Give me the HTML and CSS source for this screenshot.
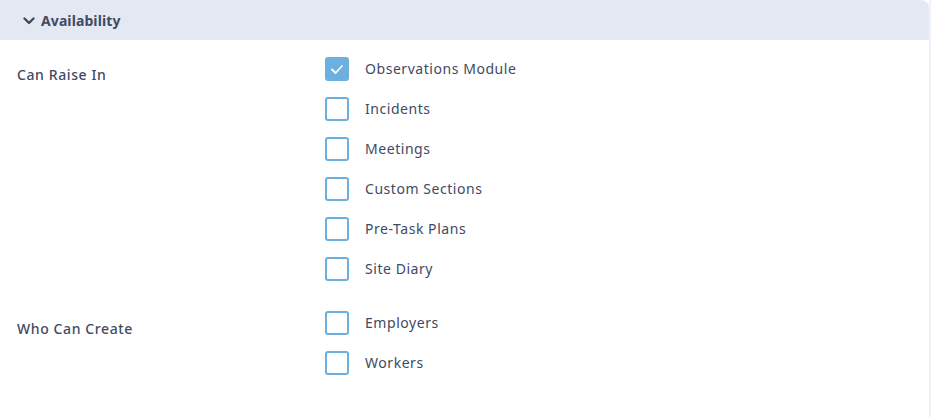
FILE: index.html
```html
<!DOCTYPE html>
<html>
<head>
<meta charset="utf-8">
<link rel="stylesheet" href="styles.css">
</head>
<body>
<div class="panel">
  <div class="panel-header">
    <svg class="chev" width="12" height="8" viewBox="0 0 12 8"><path d="M1.5 1.5 L6 6 L10.5 1.5" fill="none" stroke="#3f4a63" stroke-width="2.4" stroke-linecap="round" stroke-linejoin="round"/></svg>
    <span class="title">Availability</span>
  </div>
  <div class="panel-body">
    <div class="field">
      <div class="label">Can Raise In</div>
      <div class="options">
        <label class="opt"><span class="box checked"><svg width="14" height="11" viewBox="0 0 14 11"><path d="M2 5.5 L5.5 9 L12 2" fill="none" stroke="#fff" stroke-width="1.8" stroke-linecap="round" stroke-linejoin="round"/></svg></span><span class="txt">Observations Module</span></label>
        <label class="opt"><span class="box"></span><span class="txt">Incidents</span></label>
        <label class="opt"><span class="box"></span><span class="txt">Meetings</span></label>
        <label class="opt"><span class="box"></span><span class="txt">Custom Sections</span></label>
        <label class="opt"><span class="box"></span><span class="txt">Pre-Task Plans</span></label>
        <label class="opt"><span class="box"></span><span class="txt">Site Diary</span></label>
      </div>
    </div>
    <div class="field">
      <div class="label">Who Can Create</div>
      <div class="options">
        <label class="opt"><span class="box"></span><span class="txt">Employers</span></label>
        <label class="opt"><span class="box"></span><span class="txt">Workers</span></label>
      </div>
    </div>
  </div>
</div>
</body>
</html>
```
FILE: styles.css
```css
html, body { margin: 0; padding: 0; background: #fff; }
body {
  font-family: "Noto Sans", "Open Sans", sans-serif;
  color: #3f4a63;
  width: 931px;
  height: 417px;
  overflow: hidden;
}
.panel {
  width: 929px;
  height: 417px;
  border-right: 2px solid #eef1f7;
}
.panel-header {
  height: 40px;
  background: #e4e8f2;
  border-top-right-radius: 8px;
  display: flex;
  align-items: center;
  padding-left: 23px;
  gap: 6px;
}
.chev { margin-top: 1px; }
.title {
  font-weight: 700;
  font-size: 14px;
  letter-spacing: 0.1px;
}
.panel-body {
  padding-top: 17px;
  display: flex;
  flex-direction: column;
  gap: 30px;
}
.field {
  display: flex;
}
.label {
  width: 308px;
  padding-left: 17px;
  font-size: 14px;
  font-weight: 500;
  letter-spacing: 0.6px;
  line-height: 24px;
  padding-top: 6px;
}
.options {
  display: flex;
  flex-direction: column;
  gap: 16px;
}
.opt {
  display: flex;
  align-items: center;
  height: 24px;
}
.box {
  width: 20px;
  height: 20px;
  border: 2px solid #6ab0e1;
  border-radius: 3px;
  display: flex;
  align-items: center;
  justify-content: center;
  margin-right: 16px;
}
.box.checked {
  background: #6cb0e0;
  border-color: #6cb0e0;
}
.txt {
  font-size: 14px;
  letter-spacing: 0.55px;
  margin-top: -2px;
}
```
